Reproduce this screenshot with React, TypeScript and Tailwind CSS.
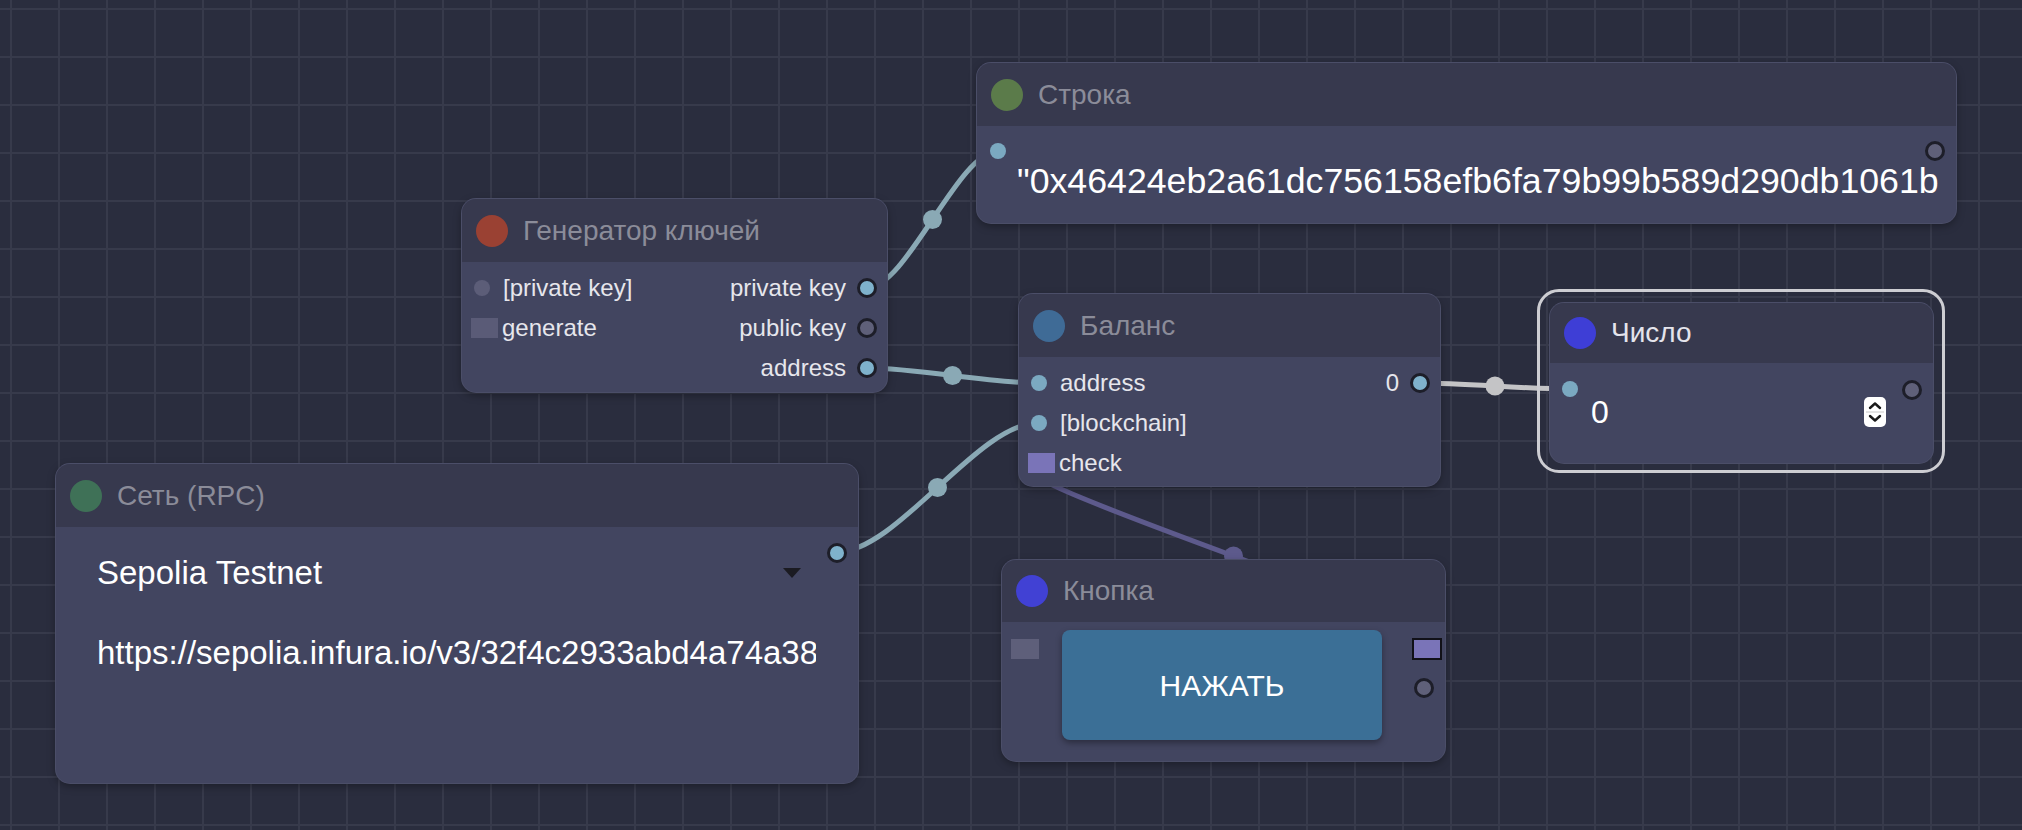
import React from "react";

const FONT = "font-['Liberation_Sans',Arial,sans-serif]";

type SockKind = "inBlue" | "inGray" | "outBlue" | "outGray";
const SOCK: Record<SockKind, string> = {
  inBlue: "w-4 h-4 rounded-full bg-[#7ba9c1]",
  inGray: "w-4 h-4 rounded-full bg-[#5c5d78]",
  outBlue: "w-5 h-5 rounded-full bg-[#7fb2cc] border-[3px] border-[#1d1e29]",
  outGray: "w-5 h-5 rounded-full bg-[#5f6079] border-[3px] border-[#1d1e29]",
};

function Socket({ kind, className = "" }: { kind: SockKind; className?: string }) {
  return <span className={`block shrink-0 ${SOCK[kind]} ${className}`} />;
}

function Header({ dot, title, bright = false, h = "h-[63px]" }: { dot: string; title: string; bright?: boolean; h?: string }) {
  return (
    <div className={`${h} bg-[#37394e] flex items-center pl-[14px] shrink-0`}>
      <span className={`block w-8 h-8 rounded-full ${dot}`} />
      <span className={`ml-[15px] text-[28px] leading-none ${bright ? "text-[#e4e4ec]" : "text-[#8b8c99]"}`}>{title}</span>
    </div>
  );
}

const NODE = "absolute flex flex-col rounded-[14px] overflow-hidden bg-[#424560] ring-1 ring-[#4b4e68] shadow-[0_3px_8px_rgba(0,0,0,0.35)]";

type Left = { t: "sock"; kind: SockKind; label: string } | { t: "rect"; cls: string; label: string } | null;
type Right = { label: string; kind: SockKind } | null;

function Row({ left, right }: { left: Left; right: Right }) {
  return (
    <div className="h-[40px] flex items-center text-[24px] text-[#e6e6ec]">
      {left && left.t === "sock" && (
        <>
          <Socket kind={left.kind} className="ml-[12px] mr-[13px]" />
          <span>{left.label}</span>
        </>
      )}
      {left && left.t === "rect" && (
        <>
          <span className={`block ml-[9px] mr-[4px] w-[27px] h-[20px] ${left.cls}`} />
          <span>{left.label}</span>
        </>
      )}
      {right && (
        <div className="ml-auto flex items-center">
          <span>{right.label}</span>
          <Socket kind={right.kind} className="ml-[11px] mr-[10px]" />
        </div>
      )}
    </div>
  );
}

function bez(x1: number, y1: number, x2: number, y2: number) {
  const k = Math.abs(x2 - x1) * 0.3;
  return `M ${x1} ${y1} C ${x1 + k} ${y1}, ${x2 - k} ${y2}, ${x2} ${y2}`;
}

const LINKS: { a: [number, number]; b: [number, number]; c: string }[] = [
  { a: [867, 288], b: [998, 151], c: "#8aa9b5" },
  { a: [867, 368], b: [1038, 383], c: "#8aa9b5" },
  { a: [837, 552], b: [1038, 423], c: "#8aa9b5" },
  { a: [1420, 383], b: [1570, 389], c: "#c4c4c6" },
  { a: [1427, 649], b: [1040, 463], c: "#5d5a8c" },
];

function Links() {
  return (
    <svg className="absolute inset-0" width={2022} height={830}>
      {LINKS.map((l, i) => (
        <g key={i}>
          <path d={bez(l.a[0], l.a[1], l.b[0], l.b[1])} stroke={l.c} strokeWidth={5} fill="none" />
          <circle cx={(l.a[0] + l.b[0]) / 2} cy={(l.a[1] + l.b[1]) / 2} r={9.5} fill={l.c} />
        </g>
      ))}
    </svg>
  );
}

export default function App() {
  return (
    <div
      className={`relative w-[2022px] h-[830px] overflow-hidden bg-[#2a2d3e] ${FONT} [background-image:linear-gradient(to_right,#373a4b_2px,transparent_2px),linear-gradient(to_bottom,#373a4b_2px,transparent_2px)] [background-size:48px_48px] [background-position:10px_8px]`}
    >
      <Links />

      {/* Генератор ключей */}
      <div className={`${NODE} left-[462px] top-[199px] w-[425px] h-[193px]`}>
        <Header dot="bg-[#9a4133]" title="Генератор ключей" />
        <div className="pt-[6px]">
          <Row left={{ t: "sock", kind: "inGray", label: "[private key]" }} right={{ label: "private key", kind: "outBlue" }} />
          <Row left={{ t: "rect", cls: "bg-[#5a5b77]", label: "generate" }} right={{ label: "public key", kind: "outGray" }} />
          <Row left={null} right={{ label: "address", kind: "outBlue" }} />
        </div>
      </div>

      {/* Строка */}
      <div className={`${NODE} left-[977px] top-[63px] w-[979px] h-[160px]`}>
        <Header dot="bg-[#5b7b4a]" title="Строка" />
        <div className="pt-[15px]">
          <div className="h-[20px] flex items-center justify-between">
            <Socket kind="inBlue" className="ml-[13px]" />
            <Socket kind="outGray" className="mr-[11px]" />
          </div>
          <div className="h-[40px] leading-[40px] ml-[40px] mr-[10px] overflow-hidden whitespace-nowrap text-[35.7px] text-white">
            "0x46424eb2a61dc756158efb6fa79b99b589d290db1061b
          </div>
        </div>
      </div>

      {/* Баланс */}
      <div className={`${NODE} left-[1019px] top-[294px] w-[421px] h-[192px]`}>
        <Header dot="bg-[#3f6b96]" title="Баланс" />
        <div className="pt-[6px]">
          <Row left={{ t: "sock", kind: "inBlue", label: "address" }} right={{ label: "0", kind: "outBlue" }} />
          <Row left={{ t: "sock", kind: "inBlue", label: "[blockchain]" }} right={null} />
          <Row left={{ t: "rect", cls: "bg-[#7a74b8]", label: "check" }} right={null} />
        </div>
      </div>

      {/* Число (selected) */}
      <div className="absolute left-[1537px] top-[289px] w-[408px] h-[184px] rounded-[22px] border-[3px] border-[#cdcdd2] pl-[10px] pt-[11px]">
        <div className="flex flex-col w-[383px] h-[160px] rounded-[14px] overflow-hidden bg-[#424560] ring-1 ring-[#4b4e68]">
          <Header dot="bg-[#3e3ed6]" title="Число" bright h="h-[60px]" />
          <div className="flex items-start">
            <Socket kind="inBlue" className="ml-[12px] mt-[18px]" />
            <div className="flex-1 ml-[13px] mt-[29px] h-[40px] flex items-center">
              <span className="text-[32px] text-white leading-none">0</span>
              <span className="ml-auto w-[22px] h-[30px] rounded-[5px] bg-white flex flex-col items-center justify-center">
                <svg width="22" height="30" viewBox="0 0 22 30">
                  <path d="M6 11 L11 6.5 L16 11" stroke="#1a1a1a" strokeWidth="2.4" fill="none" strokeLinecap="round" strokeLinejoin="round" />
                  <line x1="2" y1="15" x2="20" y2="15" stroke="#c8c8c8" strokeWidth="1" />
                  <path d="M6 19 L11 23.5 L16 19" stroke="#1a1a1a" strokeWidth="2.4" fill="none" strokeLinecap="round" strokeLinejoin="round" />
                </svg>
              </span>
            </div>
            <Socket kind="outGray" className="ml-[16px] mr-[11px] mt-[17px]" />
          </div>
        </div>
      </div>

      {/* Сеть (RPC) */}
      <div className={`${NODE} left-[56px] top-[464px] w-[802px] h-[319px]`}>
        <Header dot="bg-[#3f7157]" title="Сеть (RPC)" />
        <div className="flex items-start">
          <div className="flex-1 min-w-0 ml-[41px] mt-[26px] text-[33px] text-white">
            <div className="h-[40px] flex items-center justify-between pr-[15px]">
              <span>Sepolia Testnet</span>
              <svg width="18" height="10" viewBox="0 0 18 10">
                <path d="M0 0 L18 0 L9 10 Z" fill="#1b1b22" />
              </svg>
            </div>
            <div className="mt-[40px] h-[40px] leading-[40px] overflow-hidden whitespace-nowrap">
              https://sepolia.infura.io/v3/32f4c2933abd4a74a3838f0d1e6a0c52
            </div>
          </div>
          <Socket kind="outBlue" className="mt-[16px] ml-[11px] mr-[11px]" />
        </div>
      </div>

      {/* Кнопка */}
      <div className={`${NODE} left-[1002px] top-[560px] w-[443px] h-[201px]`}>
        <Header dot="bg-[#4141d4]" title="Кнопка" h="h-[62px]" />
        <div className="flex items-start">
          <span className="block ml-[9px] mt-[17px] w-[28px] h-[20px] bg-[#5e5f7a]" />
          <div className="ml-[23px] mt-[8px] w-[320px] h-[110px] rounded-[8px] bg-[#3b6f96] shadow-[0_3px_6px_rgba(0,0,0,0.35)] flex items-center justify-center text-[30px] text-white">
            НАЖАТЬ
          </div>
          <div className="flex flex-col ml-[30px] mt-[16px]">
            <span className="block w-[30px] h-[22px] bg-[#7a74b8] border-2 border-[#111118]" />
            <Socket kind="outGray" className="mt-[18px] ml-[2px]" />
          </div>
        </div>
      </div>
    </div>
  );
}
